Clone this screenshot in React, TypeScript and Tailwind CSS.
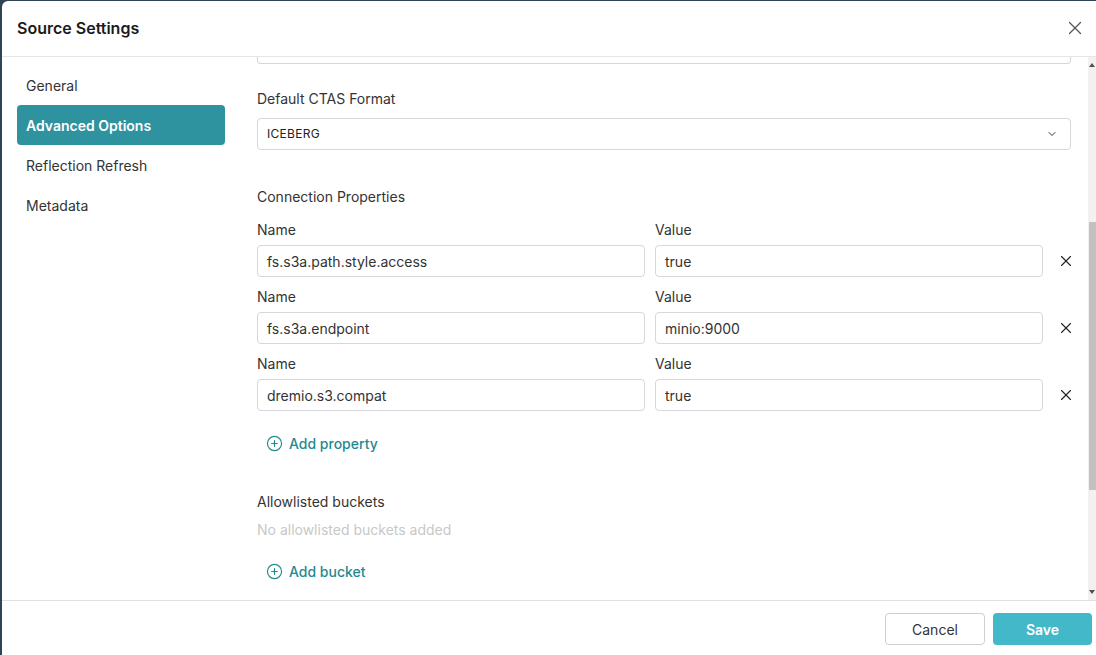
import { X, ChevronDown, CirclePlus } from "lucide-react";

const props = [
  { name: "fs.s3a.path.style.access", value: "true" },
  { name: "fs.s3a.endpoint", value: "minio:9000" },
  { name: "dremio.s3.compat", value: "true" },
];

const nav = ["General", "Advanced Options", "Reflection Refresh", "Metadata"];

function AddLink({ label }: { label: string }) {
  return (
    <div className="flex h-6 items-center gap-[6px] pl-[9px] text-[14px] font-medium text-[#1e8a90]">
      <CirclePlus size={17} strokeWidth={1.6} />
      <span>{label}</span>
    </div>
  );
}

export default function App() {
  return (
    <div
      className="h-[655px] w-[1096px] overflow-hidden bg-[#2e4556] pl-[2px] pt-px"
      style={{ fontFamily: "Inter, 'Noto Sans', sans-serif" }}
    >
      <div className="flex h-full flex-col rounded-tl-md bg-white">
        <header className="flex h-[56px] shrink-0 items-center justify-between border-b border-[#e6e6e6] pb-px pl-[15px] pr-[10px]">
          <h1 className="text-[16px] font-semibold text-[#1b1b1b]">Source Settings</h1>
          <X size={22} strokeWidth={1.3} className="text-[#555]" />
        </header>

        <div className="flex min-h-0 flex-1">
          <nav className="flex w-[239px] shrink-0 flex-col pl-[15px] pt-2">
            {nav.map((item) => (
              <div
                key={item}
                className={
                  item === "Advanced Options"
                    ? "flex h-10 w-[208px] items-center rounded bg-[#2e939f] pl-[9px] text-[14px] font-semibold text-white"
                    : "flex h-10 w-[208px] items-center pl-[9px] text-[14px] text-[#333]"
                }
              >
                {item}
              </div>
            ))}
          </nav>

          <main className="min-w-0 flex-1 pl-4 text-[14px] text-[#333]">
            <div className="h-[7px] w-[814px] rounded-b border-x border-b border-[#d6d6dc]" />

            <div className="mt-[24px] flex h-5 items-center">Default CTAS Format</div>
            <div className="mt-[10px] flex h-8 w-[814px] items-center justify-between rounded border border-[#d6d6dc] pl-[9px] pr-[12px] text-[12px] tracking-wide text-[#222]">
              <span>ICEBERG</span>
              <ChevronDown size={12} strokeWidth={2} className="text-[#333]" />
            </div>

            <div className="mt-[36px] flex h-5 items-center">Connection Properties</div>

            <div className="mt-[13px] flex flex-col gap-[9px]">
              {props.map((p) => (
                <div key={p.name} className="flex flex-col gap-[6px]">
                  <div className="flex h-5 items-center">
                    <span className="w-[398px]">Name</span>
                    <span>Value</span>
                  </div>
                  <div className="flex items-center gap-[10px]">
                    <div className="flex h-8 w-[388px] items-center rounded border border-[#d6d6dc] pl-[9px] text-[#333]">
                      {p.name}
                    </div>
                    <div className="flex h-8 w-[388px] items-center rounded border border-[#d6d6dc] pl-[9px] text-[#333]">
                      {p.value}
                    </div>
                    <div className="flex w-[22px] justify-end">
                      <X size={18} strokeWidth={1.5} className="text-[#222]" />
                    </div>
                  </div>
                </div>
              ))}
            </div>

            <div className="mt-[20px]">
              <AddLink label="Add property" />
            </div>

            <div className="mt-[36px] flex h-5 items-center">Allowlisted buckets</div>
            <div className="mt-2 flex h-5 items-center text-[#c8c8c8]">No allowlisted buckets added</div>

            <div className="mt-[20px]">
              <AddLink label="Add bucket" />
            </div>
          </main>

          <div className="flex w-2 shrink-0 flex-col items-center bg-[#f1f1f1]">
            <div className="mt-[6px] h-0 w-0 border-x-[3px] border-b-[4px] border-x-transparent border-b-[#505050]" />
            <div className="mt-[155px] h-[268px] w-[7px] bg-[#c1c1c1]" />
            <div className="mt-auto mb-[6px] h-0 w-0 border-x-[3px] border-t-[4px] border-x-transparent border-t-[#505050]" />
          </div>
        </div>

        <footer className="flex h-[55px] shrink-0 items-start justify-end gap-2 border-t border-[#e0e0e0] pr-[4px] pt-3">
          <button className="h-8 w-[100px] rounded border border-[#cfcfcf] text-[14px] text-[#333]">
            Cancel
          </button>
          <button className="h-8 w-[99px] rounded bg-[#43b8c9] text-[14px] font-semibold text-white">
            Save
          </button>
        </footer>
      </div>
    </div>
  );
}
